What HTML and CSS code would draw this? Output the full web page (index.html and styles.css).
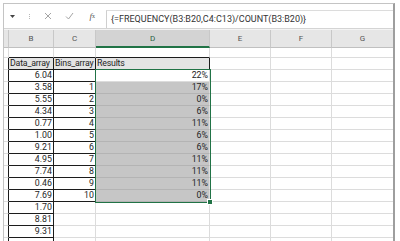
FILE: index.html
```html
<!DOCTYPE html>
<html>
<head>
<meta charset="utf-8">
<link rel="stylesheet" href="styles.css">
</head>
<body>
<div class="sheet">
  <div class="fbar">
    <div class="nb"><svg width="5" height="3" viewBox="0 0 5 3"><path d="M0 0H5L2.5 3Z" fill="#444"/></svg></div>
    <div class="vdots"><span></span><span></span><span></span></div>
    <div class="fbtn"><svg width="8" height="8" viewBox="0 0 8 8"><path d="M1 1L7 7M7 1L1 7" stroke="#9a9a9a" stroke-width="0.9" fill="none"/></svg></div>
    <div class="fbtn"><svg width="9" height="8" viewBox="0 0 9 8"><path d="M1 4.5L3.5 7L8 1" stroke="#9a9a9a" stroke-width="0.9" fill="none"/></svg></div>
    <div class="fbtn fx"><i>f</i><sub>x</sub></div>
    <div class="finput">{=FREQUENCY(B3:B20,C4:C13)/COUNT(B3:B20)}</div>
  </div>
  <div class="colhead">
    <div class="h ca"></div>
    <div class="h cb">B</div>
    <div class="h cc">C</div>
    <div class="h cd sel">D</div>
    <div class="h ce">E</div>
    <div class="h cf">F</div>
    <div class="h cg">G</div>
  </div>
  <div class="grid">
    <div class="row r1"><div class="c ca"></div><div class="c cb bb"></div><div class="c cc bb"></div><div class="c cd bb"></div><div class="c ce"></div><div class="c cf"></div><div class="c cg"></div></div>
    <div class="row r2"><div class="c ca br"></div><div class="c cb hd bx">Data_array</div><div class="c cc hd bx">Bins_array</div><div class="c cd hd bx">Results</div><div class="c ce"></div><div class="c cf"></div><div class="c cg"></div></div>
    <div class="row"><div class="c ca br"></div><div class="c cb bx n">6.04</div><div class="c cc bx n"></div><div class="c cd n act">22%</div><div class="c ce"></div><div class="c cf"></div><div class="c cg"></div></div>
    <div class="row"><div class="c ca br"></div><div class="c cb bx n">3.58</div><div class="c cc bx n">1</div><div class="c cd n sg">17%</div><div class="c ce"></div><div class="c cf"></div><div class="c cg"></div></div>
    <div class="row"><div class="c ca br"></div><div class="c cb bx n">5.55</div><div class="c cc bx n">2</div><div class="c cd n sg">0%</div><div class="c ce"></div><div class="c cf"></div><div class="c cg"></div></div>
    <div class="row"><div class="c ca br"></div><div class="c cb bx n">4.34</div><div class="c cc bx n">3</div><div class="c cd n sg">6%</div><div class="c ce"></div><div class="c cf"></div><div class="c cg"></div></div>
    <div class="row"><div class="c ca br"></div><div class="c cb bx n">0.77</div><div class="c cc bx n">4</div><div class="c cd n sg">11%</div><div class="c ce"></div><div class="c cf"></div><div class="c cg"></div></div>
    <div class="row"><div class="c ca br"></div><div class="c cb bx n">1.00</div><div class="c cc bx n">5</div><div class="c cd n sg">6%</div><div class="c ce"></div><div class="c cf"></div><div class="c cg"></div></div>
    <div class="row"><div class="c ca br"></div><div class="c cb bx n">9.21</div><div class="c cc bx n">6</div><div class="c cd n sg">6%</div><div class="c ce"></div><div class="c cf"></div><div class="c cg"></div></div>
    <div class="row"><div class="c ca br"></div><div class="c cb bx n">4.95</div><div class="c cc bx n">7</div><div class="c cd n sg">11%</div><div class="c ce"></div><div class="c cf"></div><div class="c cg"></div></div>
    <div class="row"><div class="c ca br"></div><div class="c cb bx n">7.74</div><div class="c cc bx n">8</div><div class="c cd n sg">11%</div><div class="c ce"></div><div class="c cf"></div><div class="c cg"></div></div>
    <div class="row"><div class="c ca br"></div><div class="c cb bx n">0.46</div><div class="c cc bx n">9</div><div class="c cd n sg">11%</div><div class="c ce"></div><div class="c cf"></div><div class="c cg"></div></div>
    <div class="row"><div class="c ca br"></div><div class="c cb bx n">7.69</div><div class="c cc bx n">10</div><div class="c cd n sg">0%</div><div class="c ce"></div><div class="c cf"></div><div class="c cg"></div></div>
    <div class="row"><div class="c ca br"></div><div class="c cb bx n">1.70</div><div class="c cc"></div><div class="c cd"></div><div class="c ce"></div><div class="c cf"></div><div class="c cg"></div></div>
    <div class="row"><div class="c ca br"></div><div class="c cb bx n">8.81</div><div class="c cc"></div><div class="c cd"></div><div class="c ce"></div><div class="c cf"></div><div class="c cg"></div></div>
    <div class="row"><div class="c ca br"></div><div class="c cb bx n">9.31</div><div class="c cc"></div><div class="c cd"></div><div class="c ce"></div><div class="c cf"></div><div class="c cg"></div></div>
    <div class="row"><div class="c ca br"></div><div class="c cb bx n"></div><div class="c cc"></div><div class="c cd"></div><div class="c ce"></div><div class="c cf"></div><div class="c cg"></div></div>
    <div class="selbox"><span class="handle"></span></div>
  </div>
</div>
</body>
</html>
```
FILE: styles.css
```css
html, body {
  margin: 0;
  padding: 0;
  background: #ffffff;
}
body {
  width: 400px;
  height: 241px;
  overflow: hidden;
  font-family: Roboto, "Liberation Sans", sans-serif;
  color: #222;
}
.sheet {
  margin: 3px 0 0 3px;
  width: 392px;
  border-top: 1px solid #c4c4c4;
  border-left: 1px solid #c4c4c4;
  border-right: 2px solid #9e9e9e;
  box-sizing: border-box;
}
.fbar {
  height: 24px;
  display: flex;
  align-items: center;
  background: #ffffff;
  border-bottom: 1px solid #d4d4d4;
}
.nb {
  width: 11px;
  display: flex;
  justify-content: flex-end;
  padding-top: 1px;
}
.vdots {
  width: 15px;
  display: flex;
  flex-direction: column;
  align-items: flex-end;
  gap: 1px;
}
.vdots span {
  width: 1px;
  height: 1px;
  background: #b8b8b8;
}
.fbtn {
  width: 22px;
  display: flex;
  justify-content: flex-end;
  align-items: center;
  color: #777;
}
.fx {
  width: 21px;
  font-family: "Liberation Serif", serif;
  font-size: 9px;
  color: #555;
}
.fx sub {
  font-size: 6px;
  vertical-align: -1px;
}
.finput {
  margin-left: 11px;
  align-self: stretch;
  margin-top: 6px;
  border-left: 1px solid #cfcfcf;
  border-top: 1px solid #dcdcdc;
  flex: 1;
  padding-left: 4px;
  font-size: 9px;
  line-height: 16px;
  color: #333;
  white-space: nowrap;
}
.colhead {
  display: flex;
  height: 18px;
  background: #e6e6e6;
  border-top: 1px solid #f4f4f4;
}
.h {
  box-sizing: border-box;
  height: 18px;
  border-right: 1px solid #c8c8c8;
  border-bottom: 1px solid #c0c0c0;
  font-size: 8px;
  line-height: 17px;
  text-align: center;
  color: #555;
}
.h.sel {
  background: #d3d3d3;
  color: #2a5f40;
  border-bottom: 2px solid #217346;
}
.ca { width: 5px; }
.cb { width: 45px; }
.cc { width: 42px; }
.cd { width: 114px; }
.ce { width: 61px; }
.cf { width: 61px; }
.cg { width: 61px; flex: 1; }
.h.cg { border-right: 0; }
.grid {
  position: relative;
}
.row {
  display: flex;
  height: 12px;
}
.row.r1 { height: 10px; }
.c {
  box-sizing: border-box;
  height: 100%;
  border-right: 1px solid #dcdcdc;
  border-bottom: 1px solid #dcdcdc;
  font-size: 8.8px;
  line-height: 11px;
  padding: 0 1px 0 2px;
  white-space: nowrap;
  overflow: hidden;
  color: #1e1e1e;
}
.c.cg { border-right: 0; }
.c.n { text-align: right; }
.c.bb { border-bottom-color: #1c1c1c; }
.c.br { border-right-color: #1c1c1c; }
.c.bx {
  border-right-color: #1c1c1c;
  border-bottom-color: #1c1c1c;
}
.c.hd {
  background: #e4e4e4;
  padding-left: 1px;
  letter-spacing: -0.2px;
}
.c.sg {
  background: #c6c6c6;
  border-bottom-color: #b4b4b4;
}
.c.act {
  background: #ffffff;
}
.selbox {
  position: absolute;
  left: 91px;
  top: 21px;
  width: 116px;
  height: 134px;
  border: 1px solid #217346;
  box-sizing: border-box;
}
.handle {
  position: absolute;
  right: -3px;
  bottom: -3px;
  width: 4px;
  height: 4px;
  background: #217346;
  border: 1px solid #ffffff;
  box-sizing: content-box;
}
```
